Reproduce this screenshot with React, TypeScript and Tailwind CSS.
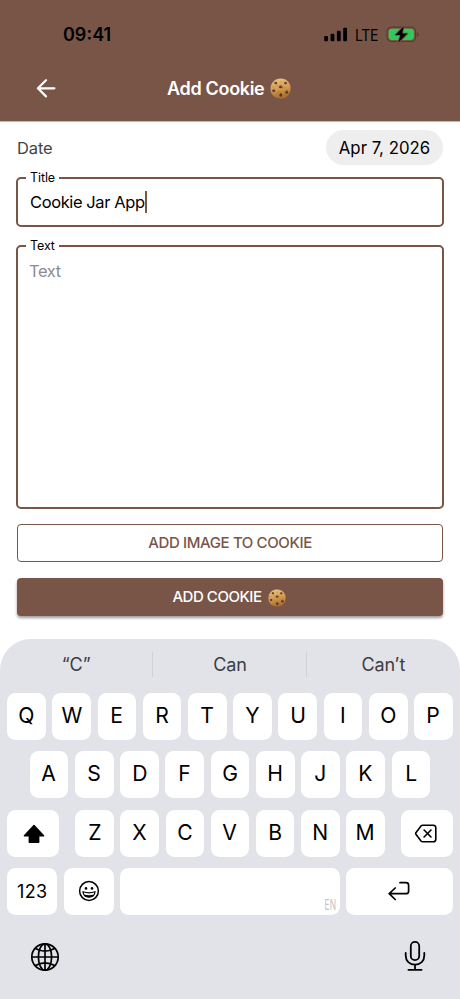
import React from "react";

function Cookie({ className }: { className: string }) {
  return (
    <svg viewBox="0 0 40 40" className={className}>
      <defs>
        <linearGradient id="dough" x1="0.4" y1="0" x2="0.6" y2="1">
          <stop offset="0" stopColor="#ecc07c" />
          <stop offset="0.5" stopColor="#d19a50" />
          <stop offset="1" stopColor="#a5672a" />
        </linearGradient>
      </defs>
      <path
        d="M20 1C26 .8 31 3 34.500 7 38 11 39.500 15 39.200 20 39 26 37 31 32.500 35 28.500 38.400 24 39.300 19 39 13 38.600 8 36.500 4.500 32 1.500 28 .6 24 1 18.500 1.300 13 4 8.500 8 5 11.500 2.200 15.500 1.100 20 1Z"
        fill="url(#dough)"
      />
      <g fill="#a66c32" opacity="0.45">
        <circle cx="21" cy="7" r="1.500" />
        <circle cx="14" cy="15" r="1.400" />
        <circle cx="27" cy="18" r="1.500" />
        <circle cx="16" cy="27" r="1.500" />
        <circle cx="27" cy="31" r="1.500" />
        <circle cx="6" cy="17" r="1.200" />
      </g>
      <g fill="#543522">
        <ellipse cx="11" cy="9.500" rx="2.700" ry="2.300" />
        <ellipse cx="29.500" cy="9.500" rx="2.600" ry="2.500" />
        <ellipse cx="20.500" cy="17" rx="3.300" ry="2.500" />
        <ellipse cx="7" cy="24.500" rx="2.700" ry="2.400" />
        <ellipse cx="32" cy="27" rx="2.700" ry="3" />
        <ellipse cx="20.500" cy="32.500" rx="2.600" ry="3.300" />
      </g>
      <g fill="#9b6b48">
        <circle cx="11.500" cy="8.700" r="1" />
        <circle cx="30" cy="8.700" r="1" />
        <circle cx="21.500" cy="16.300" r="1.200" />
        <circle cx="32.500" cy="26" r="1" />
      </g>
    </svg>
  );
}

function StatusBar() {
  return (
    <div className="flex h-[55px] items-center pt-[14px] pl-[63px] text-black">
      <span className="w-[261px] text-[18px] leading-[24px] font-semibold">09:41</span>
      <svg viewBox="0 0 24 16" className="h-[16px] w-[24px]">
        <rect x="0.200" y="9" width="3.800" height="5.300" rx="1.100" />
        <rect x="6.600" y="6.700" width="3.800" height="7.600" rx="1.100" />
        <rect x="12.900" y="3.700" width="3.800" height="10.600" rx="1.100" />
        <rect x="19.200" y="0.700" width="3.800" height="13.600" rx="1.100" />
      </svg>
      <span className="ml-[7px] w-[31px]">
        <span className="inline-block origin-left scale-x-[0.880] text-[16px] leading-[24px] tracking-[-0.4px]">LTE</span>
      </span>
      <svg viewBox="0 0 33 17" className="h-[17px] w-[33px]">
        <rect x="1.100" y="1.200" width="28.500" height="14.300" rx="4.600" fill="none" stroke="#553c33" strokeWidth="1.200" />
        <path d="M31 6.300q1.600.6 1.600 2.200T31 10.700Z" fill="#553c33" />
        <rect x="2.600" y="2.800" width="25.300" height="11.100" rx="3.100" fill="#34c759" />
        <path d="M17.800.2 9.500 8.900h5l-2.100 7.700 9-9h-5.300Z" fill="#000" stroke="#795548" strokeWidth="1.800" paintOrder="stroke" strokeLinejoin="round" />
      </svg>
    </div>
  );
}

function Header() {
  return (
    <header className="h-[122px] border-b border-[#c4b4ae] bg-[#795548]">
      <StatusBar />
      <div className="grid h-[66px] grid-cols-[130px_200px_130px] items-center text-white">
        <svg viewBox="0 0 20 20" className="ml-[36px] size-[20px]" fill="none" stroke="currentColor" strokeWidth="2.200" strokeLinecap="round" strokeLinejoin="round">
          <path d="M18.400 10.300H2M10 2.200 1.900 10.300 10 18.400" />
        </svg>
        <div className="flex items-center pt-px pl-[37px]">
          <span className="text-[18px] leading-[24px] font-semibold tracking-[-0.32px]">Add Cookie</span>
          <Cookie className="ml-[6px] size-[21px]" />
        </div>
      </div>
    </header>
  );
}

function Field({ label, className, children }: { label: string; className: string; children: React.ReactNode }) {
  return (
    <fieldset className={"rounded-[5px] border-2 border-[#795548] pl-[8px] " + className}>
      <legend className="h-[14px] px-[4px] text-[12.500px] leading-[14px] tracking-[-0.1px] text-black">{label}</legend>
      {children}
    </fieldset>
  );
}

function Form() {
  return (
    <main className="flex h-[517px] flex-col px-[16px] pt-[8px]">
      <div className="flex h-[35px] items-center justify-between px-px">
        <span className="text-[16.500px] leading-[24px] tracking-[-0.1px] text-[#444]">Date</span>
        <span className="flex h-[35px] w-[117px] items-center justify-center rounded-full bg-[#eeeeef] pt-[2px] text-[16.800px] tracking-[0.020px] text-black">
          Apr 7, 2026
        </span>
      </div>
      <Field label="Title" className="mt-[6px] h-[56px]">
        <div className="flex items-center pt-[5px] pl-[4px]">
          <span className="text-[16.500px] leading-[24px] tracking-[-0.4px] text-black">Cookie Jar App</span>
          <span className="-mt-px h-[22px] w-[2px] bg-[#795548]" />
        </div>
      </Field>
      <Field label="Text" className="mt-[12px] h-[270px]">
        <div className="pt-[6px] pl-[3px] text-[16.500px] leading-[24px] tracking-[-0.4px] text-[#8c8c8c]">Text</div>
      </Field>
      <button className="mx-px mt-[15px] h-[38px] shrink-0 rounded-[4px] border border-[#795548] pt-px text-[15px] font-medium tracking-[-0.37px] text-[#795548]">
        ADD IMAGE TO COOKIE
      </button>
      <button className="mx-px mt-[16px] flex h-[38px] shrink-0 items-center justify-center rounded-[4px] bg-[#795548] pt-px pr-[2px] text-[15px] font-medium tracking-[-0.45px] text-white shadow-[0_2px_3px_rgba(0,0,0,0.4)]">
        ADD COOKIE
        <Cookie className="ml-[6px] size-[18px]" />
      </button>
    </main>
  );
}

function Key({ className = "w-[38.700px] pb-[2px]", children }: { className?: string; children?: React.ReactNode }) {
  return (
    <div className={"flex h-[47px] shrink-0 items-center justify-center rounded-[8.500px] bg-white text-[22px] text-black " + className}>
      {children}
    </div>
  );
}

function Letters({ keys }: { keys: string }) {
  return (
    <>
      {keys.split("").map((k) => (
        <Key key={k}>
          <span className="scale-x-[0.960]">{k}</span>
        </Key>
      ))}
    </>
  );
}

function Keyboard() {
  return (
    <section className="h-[360px] rounded-t-[31px] bg-[#e2e3e8]">
      <div className="grid h-[53.700px] grid-cols-3 text-center text-[18px] leading-[26px] tracking-[-0.1px] text-[#3c3d40]">
        <div className="mt-[13px] h-[25px] border-r border-[#d0d1d6]">“C”</div>
        <div className="mt-[13px] -ml-px h-[25px] border-r border-[#d0d1d6] pl-[2px]">Can</div>
        <div className="mt-[13px] h-[25px]">Can’t</div>
      </div>
      <div className="flex flex-col gap-[11.500px] px-[7.200px]">
        <div className="flex justify-between">
          <Letters keys="QWERTYUIOP" />
        </div>
        <div className="flex justify-between px-[22.500px]">
          <Letters keys="ASDFGHJKL" />
        </div>
        <div className="flex justify-between">
          <Key className="w-[52.300px] pt-[2px] pl-px">
            <svg viewBox="0 0 22 20" className="h-[20px] w-[22px]">
              <path d="M11 1.400 20.600 11.800H15.700V18.200H6.300V11.800H1.400Z" fill="#000" stroke="#000" strokeWidth="1.400" strokeLinejoin="round" />
            </svg>
          </Key>
          <div className="flex gap-[6.450px]">
            <Letters keys="ZXCVBNM" />
          </div>
          <Key className="w-[52.300px] pt-px pr-px">
            <svg viewBox="0 0 22 19" className="h-[19px] w-[22px]" fill="none" stroke="#000" strokeWidth="1.600" strokeLinecap="round" strokeLinejoin="round">
              <path d="M7.600 1.200H18.200Q20.800 1.200 20.800 3.800V15.200Q20.800 17.800 18.200 17.800H7.600Q6.800 17.800 6.200 17.200L.9 10.300Q.4 9.500.9 8.700L6.200 1.800Q6.800 1.200 7.600 1.200ZM9.100 6 16 13M16 6 9.100 13" />
            </svg>
          </Key>
        </div>
        <div className="flex gap-[6.300px]">
          <Key className="w-[50.200px]">
            <span className="text-[18px] tracking-[0.3px]">123</span>
          </Key>
          <Key className="w-[50px] pb-px">
            <svg viewBox="0 0 22 22" className="size-[22px]" fill="none" stroke="#000" strokeWidth="1.500">
              <circle cx="11" cy="11" r="9.400" />
              <path d="M5 11.800Q11 13.800 17 11.800 16.600 17.200 11 17.200T5 11.800Z" strokeWidth="1.200" />
              <path d="M6 14.500Q11 16 16 14.500 14.600 17.200 11 17.200T6 14.500Z" fill="#000" stroke="none" />
              <circle cx="8" cy="8.400" r="1.300" fill="#000" stroke="none" />
              <circle cx="14" cy="8.400" r="1.300" fill="#000" stroke="none" />
            </svg>
          </Key>
          <Key className="w-[219.700px] !items-end !justify-end pr-[4px] pb-[2px]">
            <span className="origin-right scale-x-[0.600] text-[14px] leading-[17px] text-[#c4c4c6]">EN</span>
          </Key>
          <Key className="w-[106.800px] pb-px">
            <svg viewBox="0 0 22 20" className="h-[20px] w-[22px]" fill="none" stroke="#000" strokeWidth="1.700" strokeLinecap="round" strokeLinejoin="round">
              <path d="M12 1.700H18Q20.600 1.700 20.600 4.300V10.200Q20.600 12.700 18 12.700H1.300M7.200 7 1.200 12.700 7.200 18.500" />
            </svg>
          </Key>
        </div>
      </div>
      <div className="flex justify-between pt-[25px] pr-[34px] pl-[29.500px]">
        <svg viewBox="0 0 30 30" className="mt-[2px] size-[30px]" fill="none" stroke="#000" strokeWidth="1.700">
          <circle cx="15" cy="15" r="13.200" />
          <ellipse cx="15" cy="15" rx="6.600" ry="13.200" />
          <path d="M15 1.800V28.200M1.800 15H28.200M5 6.200Q15 12 25 6.200M5 23.800Q15 18 25 23.800" />
        </svg>
        <svg viewBox="0 0 22 32" className="h-[32px] w-[22px]" fill="none" stroke="#000" strokeWidth="1.800" strokeLinecap="round">
          <rect x="6.800" y="1.800" width="8.400" height="18.400" rx="4.200" />
          <path d="M1.700 13V15.500C1.700 21 5.500 24.600 11 24.600S20.300 21 20.300 15.500V13M11 24.600V29.800M4.400 29.800H17.600" />
        </svg>
      </div>
    </section>
  );
}

export default function App() {
  return (
    <div className="h-[999px] w-[460px] overflow-hidden bg-white font-['Inter','Liberation_Sans',sans-serif]">
      <Header />
      <Form />
      <Keyboard />
    </div>
  );
}
